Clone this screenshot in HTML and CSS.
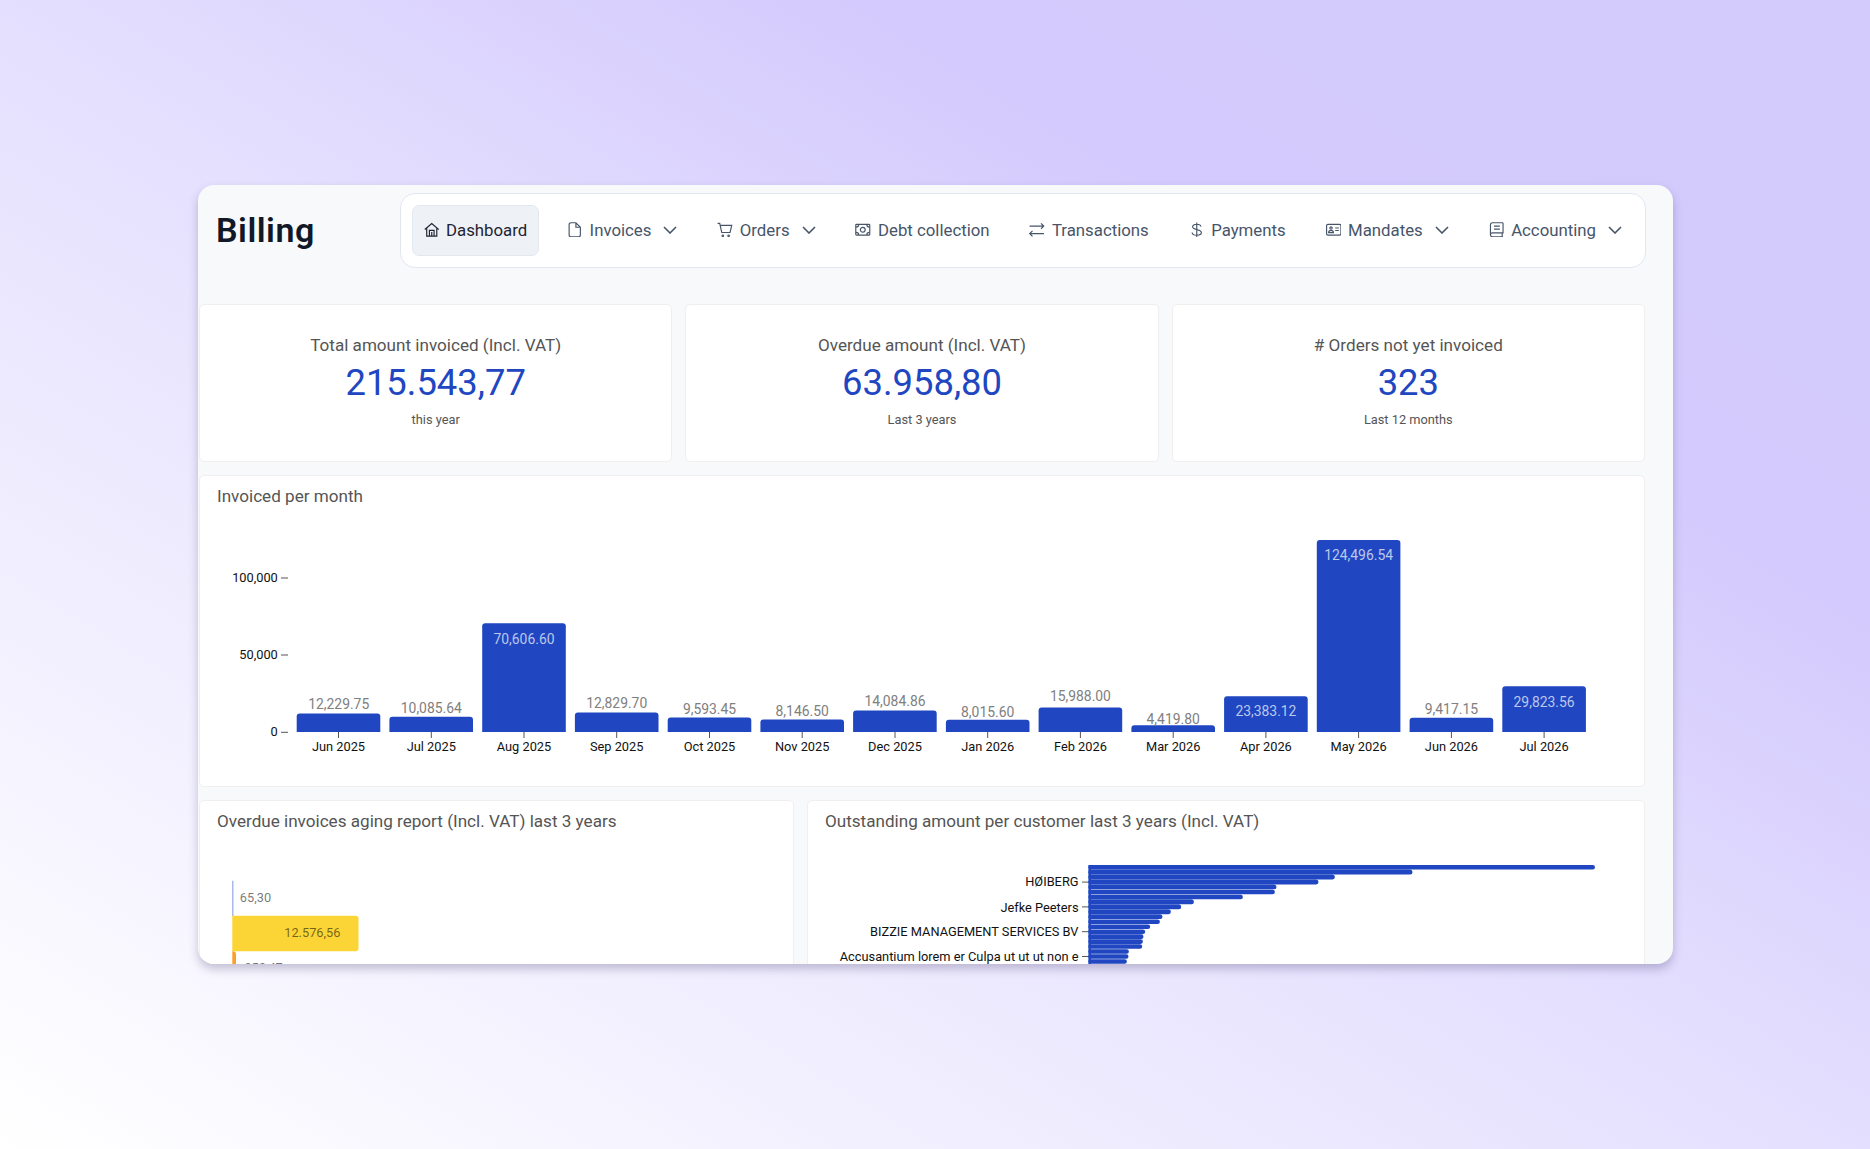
FILE: index.html
```
<!DOCTYPE html>
<html lang="en">

<head>
  <meta charset="utf-8">
  <title>Billing</title>
  <link rel="stylesheet" href="styles.css">
</head>

<body>
  <div class="window">
    <header class="header">
      <h1>Billing</h1>

      <nav class="nav">
        <a class="nav-item active">
          <svg class="icon" viewBox="0 0 16 16"><path d="M.8 7.8 8 1.6l7.200 6.200M2.800 6.400v8.100h10.400V6.400M5.600 14.500V8.600h4.800v5.900M8 10.200v4.300"/></svg>
          Dashboard
        </a>
        <a class="nav-item">
          <svg class="icon" viewBox="0 0 16 16"><path d="M9.200.8H4A1.800 1.800 0 0 0 2.200 2.600v10.800A1.800 1.800 0 0 0 4 15.200h8a1.800 1.800 0 0 0 1.800-1.800V5.400zM9.200.8v4.600h4.600"/></svg>
          Invoices
          <svg class="chevron" viewBox="0 0 14 8"><path d="m1 1 6 6 6-6"/></svg>
        </a>
        <a class="nav-item">
          <svg class="icon" viewBox="0 0 16 16"><path d="M.6 1.400h2.200l2.100 9.400h8.600l1.700-7.400H3.300"/><circle cx="6" cy="14.200" r=".8"/><circle cx="12" cy="14.200" r=".8"/></svg>
          Orders
          <svg class="chevron" viewBox="0 0 14 8"><path d="m1 1 6 6 6-6"/></svg>
        </a>
        <a class="nav-item">
          <svg class="icon" viewBox="0 0 16 16"><rect x=".8" y="2.400" width="14.400" height="11.200" rx=".8"/><circle cx="8" cy="8" r="2.500"/><path d="M3.800 2.600c0 1.500-1.200 2.700-2.800 2.700M12.200 2.600c0 1.500 1.200 2.700 2.800 2.700M3.800 13.400c0-1.500-1.200-2.700-2.800-2.700M12.200 13.400c0-1.500 1.200-2.700 2.800-2.700"/></svg>
          Debt collection
        </a>
        <a class="nav-item">
          <svg class="icon" viewBox="0 0 16 16"><path d="M.6 4.200h14.400M12.400 1.400l2.800 2.800-2.800 2.800M15.400 12H1M3.600 9.200.8 12l2.800 2.800"/></svg>
          Transactions
        </a>
        <a class="nav-item">
          <svg class="icon" viewBox="0 0 16 16"><path d="M8 .5v15M12.400 4.800C12.200 3.200 10.500 2.300 8 2.300c-2.600 0-4.300 1-4.300 2.700C3.700 8.800 12.800 6.900 12.800 10.900c0 1.700-1.900 2.800-4.800 2.800-2.700 0-4.600-1-4.800-2.900"/></svg>
          Payments
        </a>
        <a class="nav-item">
          <svg class="icon" viewBox="0 0 16 16"><rect x=".6" y="2.400" width="14.800" height="11.200" rx="1.400"/><circle cx="5.200" cy="6.300" r="1.200"/><path d="M2.700 10.900c.2-3 4.800-3 5 0zM9.500 6.200h3.800M9.500 8.800h3.800"/></svg>
          Mandates
          <svg class="chevron" viewBox="0 0 14 8"><path d="m1 1 6 6 6-6"/></svg>
        </a>
        <a class="nav-item">
          <svg class="icon" viewBox="0 0 16 16"><path d="M14.500.8H3.500a2 2 0 0 0-2 2v10.400a2 2 0 0 0 2 2h11M14.500.8v10.400h-11a2 2 0 0 0-2 2M13.600 11.200v4M5.200 4.300h6M5.200 7.300h6"/></svg>
          Accounting
          <svg class="chevron" viewBox="0 0 14 8"><path d="m1 1 6 6 6-6"/></svg>
        </a>
      </nav>
    </header>

    <main class="board">
      <section class="row kpis">
        <div class="card kpi">
          <h2>Total amount invoiced (Incl. VAT)</h2>
          <p class="amount">215.543,77</p>
          <p class="period">this year</p>
        </div>
        <div class="card kpi">
          <h2>Overdue amount (Incl. VAT)</h2>
          <p class="amount">63.958,80</p>
          <p class="period">Last 3 years</p>
        </div>
        <div class="card kpi">
          <h2># Orders not yet invoiced</h2>
          <p class="amount">323</p>
          <p class="period">Last 12 months</p>
        </div>
      </section>

      <section class="card monthly">
        <h2>Invoiced per month</h2>
        <!-- 1000 = 1.541px, zero line at y 217 -->
        <svg class="chart" width="1430" height="260" viewBox="0 0 1430 260">
          <g class="axis end">
            <text x="77.800" y="67.300">100,000</text>
            <text x="77.800" y="144.300">50,000</text>
            <text x="77.800" y="221.300">0</text>
          </g>
          <path class="tick" d="M81 63h7M81 140h7M81 217.300h7"/>
          <g class="bars">
            <path d="M96.700 217v-15.600q0-3 3-3h77.600q3 0 3 3V217z"/>
            <path d="M189.400 217v-12.300q0-3 3-3H270q3 0 3 3V217z"/>
            <path d="M282.200 217V111.200q0-3 3-3h77.600q3 0 3 3V217z"/>
            <path d="M374.900 217v-16.600q0-3 3-3h77.600q3 0 3 3V217z"/>
            <path d="M467.700 217v-11.600q0-3 3-3h77.600q3 0 3 3V217z"/>
            <path d="M560.400 217v-9.400q0-3 3-3H641q3 0 3 3V217z"/>
            <path d="M653.100 217v-18.500q0-3 3-3h77.600q3 0 3 3V217z"/>
            <path d="M745.900 217v-9.200q0-3 3-3h77.600q3 0 3 3V217z"/>
            <path d="M838.600 217v-21.400q0-3 3-3h77.600q3 0 3 3V217z"/>
            <path d="M931.400 217v-3.700q0-3 3-3H1012q3 0 3 3v3.700z"/>
            <path d="M1024.100 217v-32.800q0-3 3-3h77.600q3 0 3 3V217z"/>
            <path d="M1116.800 217V28q0-3 3-3h77.600q3 0 3 3v189z"/>
            <path d="M1209.600 217v-11.300q0-3 3-3h77.600q3 0 3 3V217z"/>
            <path d="M1302.300 217v-42.700q0-3 3-3h77.600q3 0 3 3V217z"/>
          </g>
          <path class="tick" d="M138.500 217v6M231.300 217v6M324 217v6M416.700 217v6M509.500 217v6M602.200 217v6M695 217v6M787.700 217v6M880.400 217v6M973.200 217v6M1065.900 217v6M1158.600 217v6M1251.400 217v6M1344.100 217v6"/>
          <g class="values">
            <text x="138.700" y="194">12,229.75</text>
            <text x="231.300" y="198.200">10,085.64</text>
            <text class="in" x="324" y="129">70,606.60</text>
            <text x="416.700" y="193">12,829.70</text>
            <text x="509.500" y="199">9,593.45</text>
            <text x="602.200" y="201.300">8,146.50</text>
            <text x="695" y="191">14,084.86</text>
            <text x="787.700" y="202.200">8,015.60</text>
            <text x="880.400" y="186.300">15,988.00</text>
            <text x="973.200" y="209">4,419.80</text>
            <text class="in" x="1065.900" y="201.300">23,383.12</text>
            <text class="in" x="1158.600" y="45.300">124,496.54</text>
            <text x="1251.400" y="199">9,417.15</text>
            <text class="in" x="1344.100" y="191.700">29,823.56</text>
          </g>
          <g class="axis middle">
            <text x="138.500" y="236.300">Jun 2025</text>
            <text x="231.300" y="236.300">Jul 2025</text>
            <text x="324" y="236.300">Aug 2025</text>
            <text x="416.700" y="236.300">Sep 2025</text>
            <text x="509.500" y="236.300">Oct 2025</text>
            <text x="602.200" y="236.300">Nov 2025</text>
            <text x="695" y="236.300">Dec 2025</text>
            <text x="787.700" y="236.300">Jan 2026</text>
            <text x="880.400" y="236.300">Feb 2026</text>
            <text x="973.200" y="236.300">Mar 2026</text>
            <text x="1065.900" y="236.300">Apr 2026</text>
            <text x="1158.600" y="236.300">May 2026</text>
            <text x="1251.400" y="236.300">Jun 2026</text>
            <text x="1344.100" y="236.300">Jul 2026</text>
          </g>
        </svg>
      </section>

      <section class="row reports">
        <div class="card aging">
          <h2>Overdue invoices aging report (Incl. VAT) last 3 years</h2>
          <svg class="chart" width="590" height="200" viewBox="0 0 590 200">
            <path fill="#a9b9ec" d="M32 40.700h1.500V76H32z"/>
            <path fill="#fbd535" d="M32.300 75.700h123.200q3 0 3 3v29.600q0 3-3 3H32.300z"/>
            <path fill="#f9a12b" d="M32.300 111.200H33q3 0 3 3V144q0 3-3 3h-.7z"/>
            <g class="axis soft">
              <text x="39.800" y="62.300">65,30</text>
              <text x="84.200" y="97.300">12.576,56</text>
              <text x="44.300" y="131.600">252,47</text>
            </g>
          </svg>
        </div>

        <div class="card customers">
          <h2>Outstanding amount per customer last 3 years (Incl. VAT)</h2>
          <svg class="chart" width="836" height="200" viewBox="0 0 836 200">
            <g class="axis end">
              <text x="270.500" y="46.300">HØIBERG</text>
              <text x="270.500" y="71.500">Jefke Peeters</text>
              <text x="270.500" y="96.300">BIZZIE MANAGEMENT SERVICES BV</text>
              <text x="270.500" y="121">Accusantium lorem er Culpa ut ut ut non e</text>
            </g>
            <path class="tick" d="M274 42.100h7M274 66.900h7M274 91.700h7M274 116.500h7"/>
            <path class="hbars" d="M282.600 27.200H784.700M282.600 32.160h319.600M282.600 37.120h242M282.600 42.080h225.600M282.600 47.040h183.600M282.600 52h182M282.600 56.960h150M282.600 61.920h101M282.600 66.880h88.300M282.600 71.840h78M282.600 76.800h69.600M282.600 81.760h67M282.600 86.720h57.300M282.600 91.680h52.300M282.600 96.640h50.600M282.600 101.600h50M282.600 106.560h49.300M282.600 111.520h36M282.600 116.480h35.600M282.600 121.440h34M282.600 126.400h32.400"/>
            <path fill="#2046c1" d="M280.400 25h2.600v110h-2.600z"/>
          </svg>
        </div>
      </section>
    </main>
  </div>
</body>

</html>
```
FILE: styles.css
```
* {
  box-sizing: border-box;
}

html, body {
  margin: 0;
  padding: 0;
  height: 100%;
  font-family: Roboto, "Liberation Sans", sans-serif;
}

body {
  padding: 185px 197px 0 198px;
  background: linear-gradient(to top right, #fff 0%, #e4dffe 50%, #d4cafd 73%, #d3cbfc 100%);
}

h1, h2, p {
  margin: 0;
}

.window {
  height: 779px;
  overflow: hidden;
  border-radius: 16px;
  background: #f8f9fb;
  box-shadow: 0 5px 10px rgba(60, 50, 100, .28);
}

.header {
  display: flex;
  justify-content: space-between;
  padding: 8px 27px 0 18px;
}

h1 {
  font-size: 34px;
  font-weight: 600;
  line-height: 74px;
  letter-spacing: .5px;
  color: #111827;
}

.nav {
  display: flex;
  justify-content: space-between;
  align-items: center;
  width: 1246px;
  height: 75px;
  padding: 0 11px 0 10.500px;
  border: 1px solid #e2e6ef;
  border-radius: 15px;
  background: #fff;
}

.nav-item {
  display: flex;
  align-items: center;
  height: 51px;
  padding: 0 11px 2px;
  border: 1px solid transparent;
  border-radius: 7px;
  font-size: 16.800px;
  color: #475569;
  white-space: nowrap;
}

.nav-item.active {
  border-color: #e2e8f0;
  background: #eef1f6;
  color: #1e2433;
}

.icon, .chevron {
  fill: none;
  stroke: currentColor;
  stroke-width: 1.200;
}

.icon {
  width: 15.500px;
  height: 15.500px;
  margin-right: 7px;
}

.chevron {
  width: 14px;
  height: 8px;
  margin-left: 12px;
  stroke-width: 1.600;
}

.board {
  display: flex;
  flex-direction: column;
  gap: 13px;
  padding: 36px 28px 0 1px;
}

.row {
  display: flex;
  gap: 13px;
}

.card {
  border: 1px solid #f1eef0;
  border-radius: 5px;
  background: #fff;
}

h2 {
  font-size: 17.100px;
  font-weight: 400;
  line-height: 20px;
  color: #555;
}

.kpi {
  flex: 1;
  height: 158px;
  padding-top: 30px;
  text-align: center;
}

.amount {
  margin-top: 6px;
  font-size: 36.400px;
  line-height: 44px;
  color: #2046c1;
}

.period {
  margin-top: 7px;
  font-size: 12.800px;
  line-height: 16px;
  color: #555;
}

.monthly {
  height: 312px;
}

.monthly h2, .reports h2 {
  padding: 10px 17px 0;
}

.chart {
  display: block;
  margin-top: 9px;
}

.aging {
  width: 595px;
  height: 300px;
}

.customers {
  flex: 1;
  height: 300px;
}

.axis {
  font-size: 12.800px;
  fill: #111;
}

.axis.soft {
  fill: rgba(0, 0, 0, .55);
}

.end {
  text-anchor: end;
}

.middle {
  text-anchor: middle;
}

.values {
  font-size: 13.900px;
  fill: #808080;
  text-anchor: middle;
}

.values .in {
  fill: #bcc8ec;
}

.bars {
  fill: #2046c1;
}

.tick {
  fill: none;
  stroke: #555;
}

.hbars {
  fill: none;
  stroke: #2046c1;
  stroke-width: 4.600;
  stroke-linecap: round;
}
```
